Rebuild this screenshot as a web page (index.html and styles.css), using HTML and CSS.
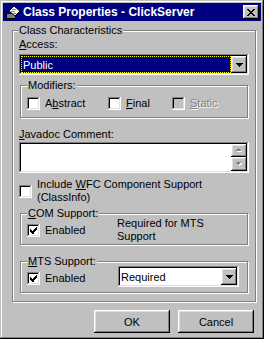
FILE: index.html
```html
<!DOCTYPE html>
<html lang="en">

<head>
    <meta charset="UTF-8">
    <title>Class Properties - ClickServer</title>
    <link rel="stylesheet" href="styles.css">
</head>

<body>
    <div class="window">
        <!-- Title bar -->
        <header class="titlebar">
            <svg class="app-icon" width="16" height="16" viewBox="0 0 16 16" shape-rendering="crispEdges">
                <path d="M1 9h3v1H1z M1 10h1v4H1z M1 14h9v1H1z M10 11h1v4h-1z" fill="#000"/>
                <path d="M2 10h8v4H2z" fill="#808080"/>
                <path d="M4 7l5-5 6 5-5 5z" fill="#fff" stroke="#000" stroke-width="1" shape-rendering="auto"/>
                <path d="M6 7h4v1H6z M7 5h4v1H7z M8 9h3v1H8z" fill="#808080"/>
            </svg>
            <span class="title">Class Properties - ClickServer</span>
            <span class="raised close-btn">
                <svg width="8" height="7" viewBox="0 0 8 7" shape-rendering="crispEdges">
                    <path d="M0 0h2v1H0z M6 0h2v1H6z M1 1h2v1H1z M5 1h2v1H5z M2 2h4v1H2z M3 3h2v1H3z M2 4h4v1H2z M1 5h2v1H1z M5 5h2v1H5z M0 6h2v1H0z M6 6h2v1H6z" fill="#000"/>
                </svg>
            </span>
        </header>

        <main class="client">
            <section class="group outer-group">
                <div class="group-title">Class Characteristics</div>

                <div class="label"><u>A</u>ccess:</div>
                <div class="sunken combo access">
                    <span class="combo-text selected">Public</span>
                    <span class="raised drop-btn">
                        <svg width="7" height="4" viewBox="0 0 7 4" shape-rendering="crispEdges"><path d="M0 0h7v1H0z M1 1h5v1H1z M2 2h3v1H2z M3 3h1v1H3z" fill="#000"/></svg>
                    </span>
                </div>

                <section class="group sub modifiers">
                    <div class="group-title">Modifiers:</div>
                    <div class="row">
                        <span class="check abstract"><span class="sunken box"></span><span>A<u>b</u>stract</span></span>
                        <span class="check final"><span class="sunken box"></span><span><u>F</u>inal</span></span>
                        <span class="check disabled"><span class="sunken box"></span><span><u>S</u>tatic</span></span>
                    </div>
                </section>

                <div class="label javadoc-label"><u>J</u>avadoc Comment:</div>
                <div class="sunken textarea">
                    <div class="ta-body"></div>
                    <div class="scrollbar">
                        <span class="raised sbtn up">
                            <svg width="8" height="5" viewBox="0 0 8 5" shape-rendering="crispEdges"><path d="M4 1h1v1H4z M3 2h3v1H3z M2 3h5v1H2z" fill="#fff"/><path d="M3 0h1v1H3z M2 1h3v1H2z M1 2h5v1H1z" fill="#808080"/></svg>
                        </span>
                        <span class="raised sbtn down">
                            <svg width="8" height="5" viewBox="0 0 8 5" shape-rendering="crispEdges"><path d="M2 1h5v1H2z M3 2h3v1H3z M4 3h1v1H4z" fill="#fff"/><path d="M1 0h5v1H1z M2 1h3v1H2z M3 2h1v1H3z" fill="#808080"/></svg>
                        </span>
                    </div>
                </div>

                <div class="check wfc">
                    <span class="sunken box"></span>
                    <span>Include <u>W</u>FC Component Support<br>(ClassInfo)</span>
                </div>

                <section class="group sub com">
                    <div class="group-title"><u>C</u>OM Support:</div>
                    <div class="row">
                        <span class="check checked"><span class="sunken box"><svg width="7" height="7" viewBox="0 0 7 7" shape-rendering="crispEdges"><path d="M6 0h1v3H6z M5 1h1v3H5z M4 2h1v3H4z M0 2h1v3H0z M1 3h1v3H1z M2 4h2v3H2z M3 3h1v1H3z" fill="#000"/></svg></span><span>Enabled</span></span>
                        <span class="note">Required for MTS<br>Support</span>
                    </div>
                </section>

                <section class="group sub mts">
                    <div class="group-title"><u>M</u>TS Support:</div>
                    <div class="row">
                        <span class="check checked"><span class="sunken box"><svg width="7" height="7" viewBox="0 0 7 7" shape-rendering="crispEdges"><path d="M6 0h1v3H6z M5 1h1v3H5z M4 2h1v3H4z M0 2h1v3H0z M1 3h1v3H1z M2 4h2v3H2z M3 3h1v1H3z" fill="#000"/></svg></span><span>Enabled</span></span>
                        <div class="sunken combo required">
                            <span class="combo-text">Required</span>
                            <span class="raised drop-btn">
                                <svg width="7" height="4" viewBox="0 0 7 4" shape-rendering="crispEdges"><path d="M0 0h7v1H0z M1 1h5v1H1z M2 2h3v1H2z M3 3h1v1H3z" fill="#000"/></svg>
                            </span>
                        </div>
                    </div>
                </section>
            </section>

            <div class="buttons">
                <span class="raised push">OK</span>
                <span class="raised push">Cancel</span>
            </div>
        </main>
    </div>
</body>

</html>
```

FILE: styles.css
```css
body {
    margin: 0;
    background-color: #c0c0c0;
}

.window {
    width: 264px;
    height: 339px;
    box-sizing: border-box;
    padding: 3px;
    background-color: #c0c0c0;
    box-shadow: inset -1px -1px #000, inset 1px 1px #c0c0c0, inset -2px -2px #808080, inset 2px 2px #fff;
    font: 11px "Liberation Sans", Arial, sans-serif;
    color: #000;
}

/* bevels */

.raised {
    background-color: #c0c0c0;
    box-shadow: inset -1px -1px #000, inset 1px 1px #fff, inset -2px -2px #808080, inset 2px 2px #dfdfdf;
}

.sunken {
    box-shadow: inset -1px -1px #fff, inset 1px 1px #808080, inset -2px -2px #dfdfdf, inset 2px 2px #000;
}

/* title bar */

.titlebar {
    height: 18px;
    display: flex;
    align-items: center;
    gap: 2px;
    padding: 0 2px;
    background-color: #000080;
    color: #fff;
}

.title {
    flex: 1;
    font-weight: bold;
    font-size: 12px;
    white-space: nowrap;
}

.close-btn {
    width: 16px;
    height: 14px;
    display: flex;
    align-items: center;
    justify-content: center;
}

/* group boxes */

.group {
    border: 1px solid #808080;
    box-shadow: inset 1px 1px #fff, 1px 1px #fff;
}

.group-title {
    display: table;
    margin-top: -7px;
    padding: 0 1px;
    line-height: 13px;
    background-color: #c0c0c0;
}

.outer-group {
    margin: 9px 5px 0 9px;
    padding: 0 6px 8px;
}

.outer-group > .group-title {
    margin-left: -1px;
}

.sub {
    margin: 0 1px;
    padding: 0 6px;
}

.modifiers {
    margin-top: 10px;
    padding-bottom: 7px;
}

.modifiers .row {
    margin-top: 5px;
}

.com {
    margin-top: 9px;
    padding-bottom: 1px;
}

.com .row {
    margin-top: -3px;
}

.mts {
    margin-top: 16px;
    padding-bottom: 5px;
}

.mts .row {
    margin-top: -2px;
}

.row {
    display: flex;
    align-items: flex-start;
}

.label {
    line-height: 13px;
    margin-top: 1px;
}

.javadoc-label {
    margin-top: 10px;
}

/* checkboxes */

.check {
    display: flex;
    align-items: center;
    gap: 5px;
    line-height: 13px;
}

.box {
    width: 13px;
    height: 13px;
    flex: none;
    box-sizing: border-box;
    display: flex;
    align-items: center;
    justify-content: center;
    background-color: #fff;
}

.check.abstract {
    width: 81px;
}

.check.final {
    width: 64px;
}

.check.disabled .box {
    background-color: #c0c0c0;
}

.check.disabled {
    color: #808080;
    text-shadow: 1px 1px #fff;
}

.com .check {
    width: 90px;
    margin-top: 7px;
}

.mts .check {
    width: 91px;
    margin-top: 6px;
}

.wfc {
    margin-top: 5px;
}

.note {
    line-height: 13px;
}

/* combo boxes */

.combo {
    height: 21px;
    box-sizing: border-box;
    padding: 2px;
    display: flex;
    background-color: #fff;
}

.access {
    margin-top: 3px;
}

.required {
    width: 121px;
}

.combo-text {
    flex: 1;
    display: flex;
    align-items: center;
    padding-left: 1px;
}

.combo-text.selected {
    background-color: #000080;
    color: #fff;
    border: 1px dotted #ffff00;
}

.drop-btn {
    width: 16px;
    display: flex;
    align-items: center;
    justify-content: center;
}

/* text area */

.textarea {
    height: 31px;
    margin-top: 1px;
    box-sizing: border-box;
    padding: 2px;
    display: flex;
    background-color: #fff;
}

.ta-body {
    flex: 1;
}

.scrollbar {
    width: 16px;
    display: flex;
    flex-direction: column;
}

.sbtn {
    display: flex;
    align-items: center;
    justify-content: center;
}

.sbtn.up {
    height: 13px;
}

.sbtn.down {
    flex: 1;
}

/* dialog buttons */

.buttons {
    display: flex;
    justify-content: flex-end;
    gap: 8px;
    margin: 8px 7px 0 0;
}

.push {
    width: 76px;
    height: 23px;
    display: flex;
    align-items: center;
    justify-content: center;
}
```
